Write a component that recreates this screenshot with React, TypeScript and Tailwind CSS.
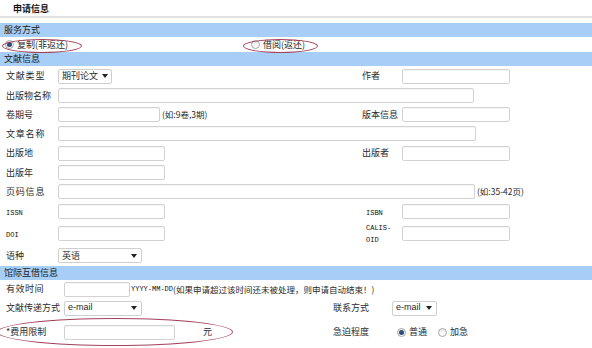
import { FC, ReactNode } from "react";

const Box: FC<{ w: string }> = ({ w }) => (
  <div
    className={`${w} h-[15px] shrink-0 rounded-[2px] border border-[#d2d2d2] bg-white shadow-[inset_0_1px_1px_rgba(0,0,0,0.04)]`}
  />
);

const Select: FC<{ w: string; text: string; latin?: boolean }> = ({ w, text, latin }) => (
  <div
    className={`${w} h-[15px] shrink-0 rounded-[2px] border border-[#cfcfcf] bg-white flex items-center justify-between pl-[3px] pr-[4px] gap-[4px]`}
  >
    <span className={latin ? "font-['Liberation_Sans'] text-[9px] whitespace-nowrap" : "text-[9px] whitespace-nowrap"}>
      {text}
    </span>
    <span className="block shrink-0 w-0 h-0 border-l-[3px] border-r-[3px] border-t-[4px] border-l-transparent border-r-transparent border-t-[#222]" />
  </div>
);

const Radio: FC<{ on?: boolean }> = ({ on }) => (
  <span className="w-[9px] h-[9px] shrink-0 rounded-full border border-[#a8a8a8] bg-gradient-to-b from-[#e8e8e8] to-white flex items-center justify-center">
    {on && <span className="w-[5px] h-[5px] rounded-full bg-[#2f4d78]" />}
  </span>
);

const Bar: FC<{ children: ReactNode }> = ({ children }) => (
  <div className="h-[14px] bg-[#a7cef7] pl-[4px] text-[9px] leading-[14px] text-[#1b1b1b]">{children}</div>
);

const Label: FC<{ w: string; children: ReactNode; cls?: string }> = ({ w, children, cls }) => (
  <div className={`${w} shrink-0 pl-[6px] ${cls ?? ""}`}>{children}</div>
);

const Mono: FC<{ children: ReactNode }> = ({ children }) => (
  <span className="font-['Liberation_Mono'] text-[7px] text-[#111]">{children}</span>
);

export default function App() {
  return (
    <div className="relative w-[592px] h-[348px] overflow-hidden bg-white font-['Noto_Sans_CJK_SC',sans-serif] text-[9px] text-[#2a2a2a]">
      <div className="h-[16px] pl-[13px] text-[9px] font-bold leading-[17px] text-[#111]">申请信息</div>
      <div className="h-[2px] bg-[#e2e2e2]" />
      <div className="h-[5px]" />
      <Bar>服务方式</Bar>
      <div className="h-[15px] flex items-center">
        <div className="w-[251px] flex items-center pl-[5px] gap-[3px]">
          <Radio on />
          <span>复制(非返还)</span>
        </div>
        <div className="flex items-center gap-[3px]">
          <Radio />
          <span>借阅(返还)</span>
        </div>
      </div>
      <Bar>文献信息</Bar>

      <div className="h-[20px] flex items-center">
        <Label w="w-[58px]" cls="tracking-[0.8px]">文献类型</Label>
        <div className="w-[302px] shrink-0">
          <Select w="w-[54px]" text="期刊论文" />
        </div>
        <div className="w-[42px] shrink-0 pl-[2px]">作者</div>
        <Box w="w-[108px]" />
      </div>
      <div className="h-[19px] flex items-center">
        <Label w="w-[58px]">出版物名称</Label>
        <Box w="w-[416px]" />
      </div>
      <div className="h-[19px] flex items-center">
        <Label w="w-[58px]">卷期号</Label>
        <div className="w-[302px] shrink-0 flex items-center gap-[2px]">
          <Box w="w-[102px]" />
          <span className="text-[8.5px]">(如:9卷,3期)</span>
        </div>
        <div className="w-[42px] shrink-0 pl-[2px]">版本信息</div>
        <Box w="w-[108px]" />
      </div>
      <div className="h-[19px] flex items-center">
        <Label w="w-[58px]" cls="tracking-[0.8px]">文章名称</Label>
        <Box w="w-[418px]" />
      </div>
      <div className="h-[20px] flex items-center">
        <Label w="w-[58px]">出版地</Label>
        <div className="w-[302px] shrink-0">
          <Box w="w-[107px]" />
        </div>
        <div className="w-[42px] shrink-0 pl-[2px]">出版者</div>
        <Box w="w-[108px]" />
      </div>
      <div className="h-[19px] flex items-center">
        <Label w="w-[58px]">出版年</Label>
        <Box w="w-[107px]" />
      </div>
      <div className="h-[19px] flex items-center">
        <Label w="w-[58px]" cls="tracking-[0.8px]">页码信息</Label>
        <Box w="w-[417px]" />
        <span className="pl-[2px] text-[8.5px]">(如:35-42页)</span>
      </div>
      <div className="h-[21px] flex items-center">
        <Label w="w-[58px]">
          <Mono>ISSN</Mono>
        </Label>
        <div className="w-[302px] shrink-0">
          <Box w="w-[107px]" />
        </div>
        <div className="w-[42px] shrink-0 pl-[6px] leading-none">
          <Mono>ISBN</Mono>
        </div>
        <Box w="w-[108px]" />
      </div>
      <div className="h-[23px] flex items-center">
        <Label w="w-[58px]">
          <Mono>DOI</Mono>
        </Label>
        <div className="w-[302px] shrink-0">
          <Box w="w-[107px]" />
        </div>
        <div className="w-[42px] shrink-0 pl-[6px] flex flex-col leading-[12px]">
          <Mono>CALIS-</Mono>
          <Mono>OID</Mono>
        </div>
        <Box w="w-[108px]" />
      </div>
      <div className="h-[21px] flex items-center">
        <Label w="w-[58px]">语种</Label>
        <Select w="w-[84px]" text="英语" />
      </div>

      <Bar>馆际互借信息</Bar>

      <div className="h-[18px] flex items-center">
        <Label w="w-[64px]" cls="tracking-[0.5px]">有效时间</Label>
        <Box w="w-[66px]" />
        <span className="pl-[1px] flex items-center">
          <Mono>YYYY-MM-DD</Mono>
          <span className="text-[8.5px]">(如果申请超过该时间还未被处理，则申请自动结束！)</span>
        </span>
      </div>
      <div className="h-[20px] flex items-center">
        <Label w="w-[64px]">文献传递方式</Label>
        <div className="w-[269px] shrink-0">
          <Select w="w-[78px]" text="e-mail" latin />
        </div>
        <div className="w-[59px] shrink-0">联系方式</div>
        <Select w="w-[45px]" text="e-mail" latin />
      </div>
      <div className="h-[28px] flex items-center">
        <Label w="w-[64px]">*费用限制</Label>
        <Box w="w-[111px]" />
        <span className="w-[158px] shrink-0 pl-[28px]">元</span>
        <div className="w-[64px] shrink-0">急迫程度</div>
        <div className="flex items-center gap-[3px]">
          <Radio on />
          <span className="mr-[8px]">普通</span>
          <Radio />
          <span>加急</span>
        </div>
      </div>

      {/* red marker ellipses drawn over the form */}
      <div className="absolute left-[2px] top-[39px] w-[80px] h-[14px] rounded-[50%] border border-[#a3425c]" />
      <div className="absolute left-[243px] top-[39px] w-[75px] h-[14px] rounded-[50%] border border-[#a3425c]" />
      <div className="absolute left-[-3px] top-[318px] w-[236px] h-[28px] rounded-[50%] border border-[#a3425c]" />
    </div>
  );
}
